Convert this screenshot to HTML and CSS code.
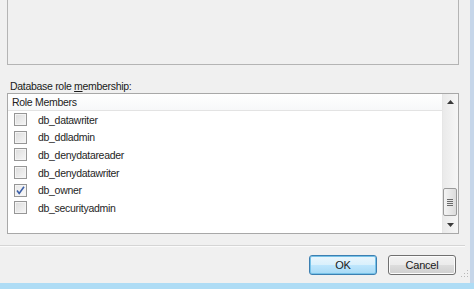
FILE: index.html
```html
<!DOCTYPE html>
<html>
<head>
<meta charset="utf-8">
<link rel="stylesheet" href="styles.css">
</head>
<body>
<div class="window">
  <div class="content">
    <div class="main">
      <div class="topbox"></div>
      <div class="label">Database role <u>m</u>embership:</div>
      <div class="listbox">
        <div class="listarea">
          <div class="header">Role Members</div>
          <div class="row"><span class="cb"></span><span class="name">db_datawriter</span></div>
          <div class="row"><span class="cb"></span><span class="name">db_ddladmin</span></div>
          <div class="row"><span class="cb"></span><span class="name">db_denydatareader</span></div>
          <div class="row"><span class="cb"></span><span class="name">db_denydatawriter</span></div>
          <div class="row"><span class="cb checked"><svg width="11" height="11" viewBox="0 0 11 11"><path d="M2 5.5 L4.2 8.5 L9 1.8" fill="none" stroke="#3c5fa8" stroke-width="1.6"/></svg></span><span class="name">db_owner</span></div>
          <div class="row"><span class="cb"></span><span class="name">db_securityadmin</span></div>
        </div>
        <div class="scrollbar">
          <div class="arrow"><svg width="7" height="4" viewBox="0 0 7 4"><path d="M0 4 L3.5 0 L7 4Z" fill="#3a3a3a"/></svg></div>
          <div class="track"></div>
          <div class="thumb"><span></span><span></span><span></span><span></span></div>
          <div class="arrow down"><svg width="7" height="4" viewBox="0 0 7 4"><path d="M0 0 L3.5 4 L7 0Z" fill="#3a3a3a"/></svg></div>
        </div>
      </div>
      <div class="separator"></div>
      <div class="buttons">
        <button class="btn default">OK</button>
        <button class="btn">Cancel</button>
      </div>
    </div>
    <div class="edge">
      <div class="grip"></div>
    </div>
    <div class="frame"></div>
  </div>
  <div class="bottombar"></div>
</div>
</body>
</html>
```
FILE: styles.css
```css
html, body {
  margin: 0;
  padding: 0;
}
body {
  width: 474px;
  height: 289px;
  overflow: hidden;
  background: #f0f0f0;
  font-family: "Liberation Sans", Arial, sans-serif;
  font-size: 10.5px;
  letter-spacing: -0.3px;
  color: #1a1a1a;
}
.window {
  display: flex;
  flex-direction: column;
  height: 289px;
}
.content {
  display: flex;
  height: 283px;
}
.main {
  width: 452px;
  padding-left: 7px;
  display: flex;
  flex-direction: column;
}
.topbox {
  height: 64px;
  border: 1px solid #b4b4b4;
  border-top: none;
  background: #f0f0f0;
  flex: none;
}
.label {
  height: 28px;
  line-height: 12px;
  padding-top: 15px;
  padding-left: 3px;
  box-sizing: border-box;
  flex: none;
}
.listbox {
  height: 141px;
  border: 1px solid #a8a8a8;
  background: #fff;
  display: flex;
  box-sizing: border-box;
  flex: none;
}
.listarea {
  flex: 1;
  display: flex;
  flex-direction: column;
}
.header {
  height: 16px;
  line-height: 16px;
  padding-left: 4px;
  border-bottom: 1px solid #e3e3e3;
  background: linear-gradient(#ffffff, #f7f8f9);
  color: #222;
}
.row {
  height: 17.6px;
  display: flex;
  align-items: center;
  padding-left: 6px;
}
.cb {
  width: 11px;
  height: 11px;
  border: 1px solid #969696;
  background: linear-gradient(135deg, #dcdcdc, #f6f6f6);
  box-shadow: inset 0 0 0 1px #f4f4f4;
  display: flex;
  align-items: center;
  justify-content: center;
}
.cb.checked {
  background: linear-gradient(135deg, #e8e8e8, #fafafa);
}
.name {
  margin-left: 11px;
  color: #1e1e1e;
}
.scrollbar {
  width: 15px;
  border-left: 1px solid #e6e6e6;
  background: linear-gradient(90deg, #eaeaea, #f6f6f6);
  display: flex;
  flex-direction: column;
}
.arrow {
  height: 16px;
  display: flex;
  align-items: center;
  justify-content: center;
}
.track {
  flex: 1;
}
.thumb {
  height: 26px;
  margin: 0 1px 0 0;
  border: 1px solid #9a9a9a;
  border-radius: 2px;
  background: linear-gradient(90deg, #f4f4f4, #dcdcdc);
  display: flex;
  flex-direction: column;
  align-items: center;
  justify-content: center;
  gap: 1px;
}
.thumb span {
  width: 6px;
  height: 1px;
  background: #6a6a6a;
}
.arrow.down {
  height: 17px;
}
.separator {
  margin-top: 11px;
  height: 1px;
  background: #d5d5d5;
  border-bottom: 1px solid #fbfbfb;
  width: 465px;
  margin-left: -7px;
  flex: none;
}
.buttons {
  display: flex;
  justify-content: flex-end;
  gap: 11px;
  padding-top: 8px;
  padding-right: 3px;
}
.btn {
  width: 68px;
  height: 20px;
  padding: 0;
  font-family: "Liberation Sans", Arial, sans-serif;
  font-size: 11px;
  letter-spacing: -0.2px;
  color: #1a1a1a;
  border: 1px solid #707070;
  border-radius: 3px;
  background: linear-gradient(#f2f2f2 0%, #ebebeb 50%, #dddddd 51%, #cfcfcf 100%);
  box-shadow: inset 0 0 0 1px #fcfcfc;
}
.btn.default {
  border-color: #3c7fb1;
  background: linear-gradient(#eaf6fd 0%, #d9f0fc 50%, #bee6fd 51%, #a7d9f5 100%);
  box-shadow: inset 0 0 0 1px #76c2e8;
}
.edge {
  width: 11px;
  position: relative;
}
.grip {
  position: absolute;
  right: 2px;
  bottom: 6px;
  width: 8px;
  height: 8px;
  background:
    radial-gradient(circle, #b8b8b8 0.8px, transparent 1px) 0 0 / 3px 3px;
  clip-path: polygon(100% 0, 100% 100%, 0 100%);
}
.frame {
  width: 4px;
  background: #c6d6e9;
}
.bottombar {
  height: 6px;
  background: #aedcf5;
}
```
